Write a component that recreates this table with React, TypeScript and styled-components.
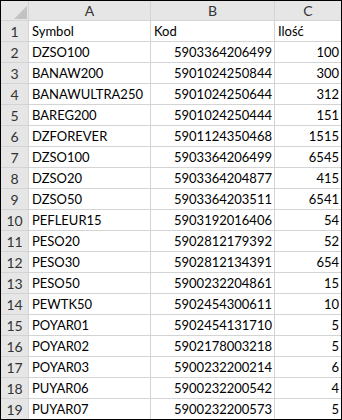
import React from 'react';
import styled, { createGlobalStyle } from 'styled-components';

const GlobalStyle = createGlobalStyle`
  html, body {
    margin: 0;
    padding: 0;
    background: #ffffff;
  }
  body {
    font-family: Lato, "Open Sans", sans-serif;
  }
`;

const Sheet = styled.div`
  display: grid;
  grid-template-columns: 27px 121px 123px 66px;
  grid-auto-rows: 20px;
  grid-template-rows: 19px;
  gap: 1px;
  width: 340px;
  background: #d4d4d4;
  border: 1px solid #000;
`;

const Corner = styled.div`
  position: relative;
  background: #e6e6e6;
  &::after {
    content: '';
    position: absolute;
    right: 1px;
    bottom: 1px;
    border-style: solid;
    border-width: 0 0 13px 13px;
    border-color: transparent transparent #c2c2c2 transparent;
  }
`;

const ColHead = styled.div`
  display: flex;
  align-items: center;
  justify-content: center;
  background: #e6e6e6;
  color: #333;
  font-size: 14px;
`;

const RowHead = styled.div`
  display: flex;
  align-items: center;
  justify-content: center;
  background: #e6e6e6;
  color: #333;
  font-size: 14px;
`;

const Cell = styled.div<{ $num?: boolean }>`
  display: flex;
  align-items: center;
  justify-content: ${(p) => (p.$num ? 'flex-end' : 'flex-start')};
  padding: 0 2px 0 3px;
  background: #fff;
  color: #000;
  font-size: 13px;
  white-space: nowrap;
  overflow: hidden;
`;

const rows: [string, string, string][] = [
  ['Symbol', 'Kod', 'Ilość'],
  ['DZSO100', '5903364206499', '100'],
  ['BANAW200', '5901024250844', '300'],
  ['BANAWULTRA250', '5901024250644', '312'],
  ['BAREG200', '5901024250444', '151'],
  ['DZFOREVER', '5901124350468', '1515'],
  ['DZSO100', '5903364206499', '6545'],
  ['DZSO20', '5903364204877', '415'],
  ['DZSO50', '5903364203511', '6541'],
  ['PEFLEUR15', '5903192016406', '54'],
  ['PESO20', '5902812179392', '52'],
  ['PESO30', '5902812134391', '654'],
  ['PESO50', '5900232204861', '15'],
  ['PEWTK50', '5902454300611', '10'],
  ['POYAR01', '5902454131710', '5'],
  ['POYAR02', '5902178003218', '5'],
  ['POYAR03', '5900232200214', '6'],
  ['PUYAR06', '5900232200542', '4'],
  ['PUYAR07', '5900232200573', '5'],
];

export default function App() {
  return (
    <>
      <GlobalStyle />
      <Sheet>
        <Corner />
        <ColHead>A</ColHead>
        <ColHead>B</ColHead>
        <ColHead>C</ColHead>
        {rows.map(([a, b, c], i) => (
          <React.Fragment key={i}>
            <RowHead>{i + 1}</RowHead>
            <Cell>{a}</Cell>
            <Cell $num={i > 0}>{b}</Cell>
            <Cell $num={i > 0}>{c}</Cell>
          </React.Fragment>
        ))}
      </Sheet>
    </>
  );
}
